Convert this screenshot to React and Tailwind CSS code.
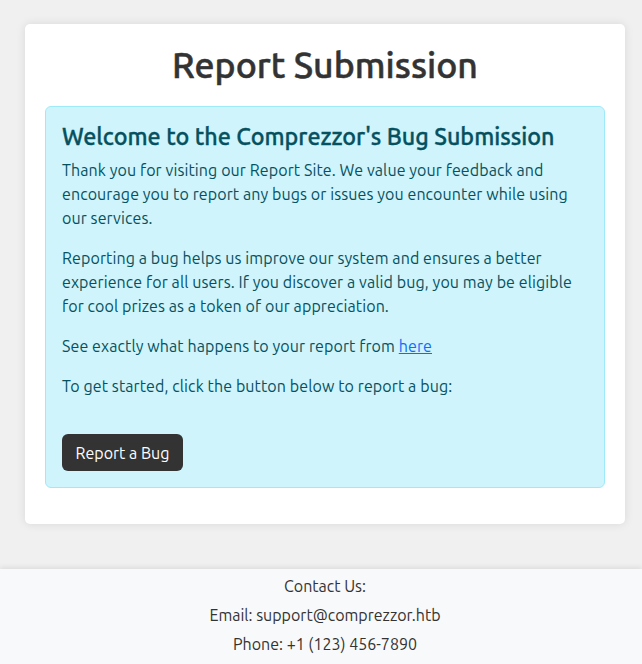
export default function App() {
  return (
    <div className="min-h-[664px] bg-[#f0f0f0] text-[#333] font-['Ubuntu','Open_Sans',sans-serif] text-[16px] leading-6">
      <div className="pt-6 pb-[45px]">
        <div className="ml-[25px] w-[600px] bg-white rounded-[5px] shadow-[0_0_10px_rgba(0,0,0,0.1)] p-5">
          <h1 className="text-center text-[35.7px] leading-[43px] font-medium [-webkit-text-stroke:0.5px_#333] text-[#333] mb-[19px]">
            Report Submission
          </h1>
          <div className="bg-[#cff4fc] border border-[#9eeaf9] rounded-[6px] text-[#055160] p-4 mb-4">
            <h4 className="text-[23.3px] leading-[27px] font-medium [-webkit-text-stroke:0.35px_#055160] mb-2">
              Welcome to the Comprezzor's Bug Submission
            </h4>
            <div className="tracking-[0.1px]">
              <p className="mb-4">
                Thank you for visiting our Report Site. We value your feedback and encourage you to report any bugs or issues you encounter while using our services.
              </p>
              <p className="mb-4">
                Reporting a bug helps us improve our system and ensures a better experience for all users. If you discover a valid bug, you may be eligible for cool prizes as a token of our appreciation.
              </p>
              <p className="mb-4">
                See exactly what happens to your report from{" "}
                <a href="#" className="text-[#0d6efd] underline">here</a>
              </p>
              <p className="mb-4">To get started, click the button below to report a bug:</p>
            </div>
            <div className="pt-5">
              <button className="bg-[#333] text-white rounded-[6px] px-[13.5px] h-[37px] leading-6">
                Report a Bug
              </button>
            </div>
          </div>
        </div>
      </div>
      <footer className="bg-[#f8f9fa] shadow-[0_-2px_5px_rgba(0,0,0,0.08)] text-center pt-[5px] pb-2 pl-2">
        <p className="mb-[5px]">Contact Us:</p>
        <p className="mb-[5px]">Email: support@comprezzor.htb</p>
        <p className="mb-[5px]">Phone: +1 (123) 456-7890</p>
      </footer>
    </div>
  );
}
